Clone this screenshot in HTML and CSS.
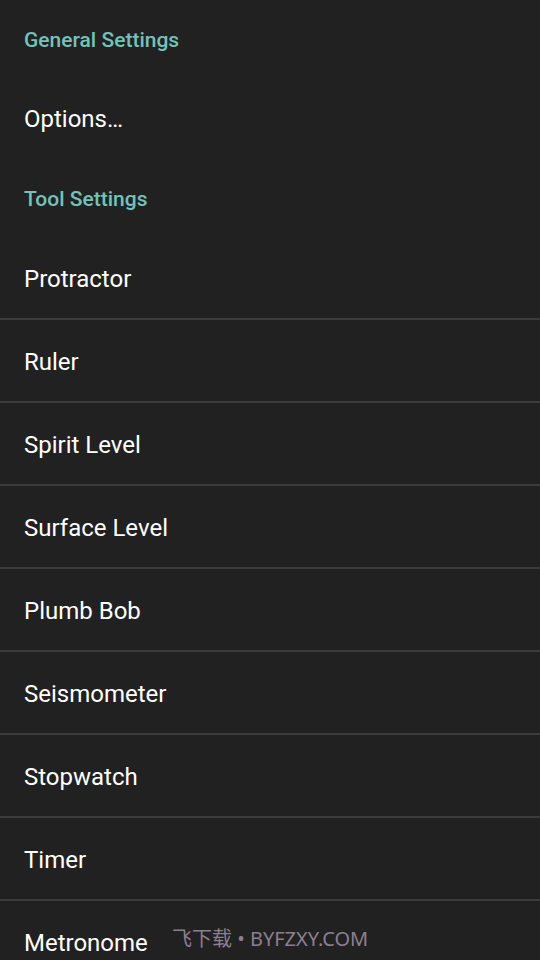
FILE: index.html
```html
<!DOCTYPE html>
<html>
<head>
<meta charset="utf-8">
<link rel="stylesheet" href="styles.css">
</head>
<body>
<div class="screen">
  <div class="category cat-general">General Settings</div>
  <div class="pref pref-options">Options…</div>
  <div class="category cat-tool">Tool Settings</div>
  <div class="pref pref-first">Protractor</div>
  <div class="pref">Ruler</div>
  <div class="pref">Spirit Level</div>
  <div class="pref">Surface Level</div>
  <div class="pref">Plumb Bob</div>
  <div class="pref">Seismometer</div>
  <div class="pref">Stopwatch</div>
  <div class="pref">Timer</div>
  <div class="pref pref-last">Metronome</div>
  <div class="watermark">飞下载 • BYFZXY.COM</div>
</div>
</body>
</html>
```
FILE: styles.css
```css
html, body {
  margin: 0;
  padding: 0;
  background: #212121;
}
.screen {
  position: relative;
  width: 540px;
  height: 960px;
  overflow: hidden;
  background: #212121;
  font-family: Roboto, "Noto Sans", sans-serif;
  display: flex;
  flex-direction: column;
}
.category {
  flex: none;
  height: 80px;
  display: flex;
  align-items: center;
  padding-left: 24px;
  font-size: 21px;
  font-weight: 500;
  color: #74c2b8;
}
.cat-general {
  height: 79px;
}
.cat-tool {
  height: 81px;
}
.pref {
  flex: none;
  box-sizing: border-box;
  height: 83px;
  padding-top: 2px;
  display: flex;
  align-items: center;
  padding-left: 24px;
  font-size: 24px;
  color: #ffffff;
  border-top: 2px solid #3b3b3b;
}
.pref-options {
  height: 79px;
  padding-top: 0;
  border-top: none;
}
.pref-first {
  height: 79px;
  padding-top: 0;
  border-top: none;
}
.watermark {
  position: absolute;
  left: 172px;
  top: 923px;
  font-family: "Noto Sans", "Noto Sans CJK SC", sans-serif;
  font-size: 20px;
  color: #8a8090;
  white-space: nowrap;
}
```
